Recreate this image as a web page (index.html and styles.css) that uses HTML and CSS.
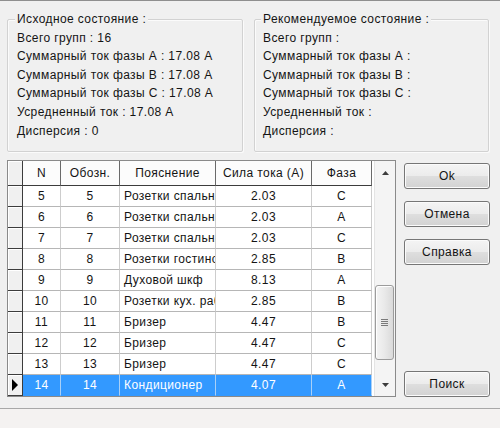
FILE: index.html
```html
<!DOCTYPE html>
<html lang="ru">
<head>
<meta charset="utf-8">
<title>Распределение по фазам</title>
<link rel="stylesheet" href="styles.css">
</head>
<body>
<div class="window">
  <div class="top">
    <div class="group group-left">
      <div class="legend">Исходное состояние :</div>
      <div>Всего групп : 16</div>
      <div>Суммарный ток фазы А : 17.08 А</div>
      <div>Суммарный ток фазы В : 17.08 А</div>
      <div>Суммарный ток фазы С : 17.08 А</div>
      <div>Усредненный ток : 17.08 А</div>
      <div>Дисперсия : 0</div>
    </div>
    <div class="group group-right">
      <div class="legend">Рекомендуемое состояние :</div>
      <div>Всего групп :</div>
      <div>Суммарный ток фазы А :</div>
      <div>Суммарный ток фазы В :</div>
      <div>Суммарный ток фазы С :</div>
      <div>Усредненный ток :</div>
      <div>Дисперсия :</div>
    </div>
  </div>

  <div class="middle">
    <div class="grid">
      <div class="table">
        <div class="row head">
          <div class="cell rh"></div>
          <div class="cell c-n">N</div>
          <div class="cell c-o">Обозн.</div>
          <div class="cell c-p center">Пояснение</div>
          <div class="cell c-s">Сила тока (А)</div>
          <div class="cell c-f">Фаза</div>
        </div>
        <div class="row"><div class="cell rh"></div><div class="cell c-n">5</div><div class="cell c-o">5</div><div class="cell c-p">Розетки спальня 1</div><div class="cell c-s">2.03</div><div class="cell c-f">C</div></div>
        <div class="row"><div class="cell rh"></div><div class="cell c-n">6</div><div class="cell c-o">6</div><div class="cell c-p">Розетки спальня 2</div><div class="cell c-s">2.03</div><div class="cell c-f">A</div></div>
        <div class="row"><div class="cell rh"></div><div class="cell c-n">7</div><div class="cell c-o">7</div><div class="cell c-p">Розетки спальня 3</div><div class="cell c-s">2.03</div><div class="cell c-f">C</div></div>
        <div class="row"><div class="cell rh"></div><div class="cell c-n">8</div><div class="cell c-o">8</div><div class="cell c-p">Розетки гостиной</div><div class="cell c-s">2.85</div><div class="cell c-f">B</div></div>
        <div class="row"><div class="cell rh"></div><div class="cell c-n">9</div><div class="cell c-o">9</div><div class="cell c-p">Духовой шкф</div><div class="cell c-s">8.13</div><div class="cell c-f">A</div></div>
        <div class="row"><div class="cell rh"></div><div class="cell c-n">10</div><div class="cell c-o">10</div><div class="cell c-p">Розетки кух. рабочая</div><div class="cell c-s">2.85</div><div class="cell c-f">B</div></div>
        <div class="row"><div class="cell rh"></div><div class="cell c-n">11</div><div class="cell c-o">11</div><div class="cell c-p">Бризер</div><div class="cell c-s">4.47</div><div class="cell c-f">B</div></div>
        <div class="row"><div class="cell rh"></div><div class="cell c-n">12</div><div class="cell c-o">12</div><div class="cell c-p">Бризер</div><div class="cell c-s">4.47</div><div class="cell c-f">C</div></div>
        <div class="row"><div class="cell rh"></div><div class="cell c-n">13</div><div class="cell c-o">13</div><div class="cell c-p">Бризер</div><div class="cell c-s">4.47</div><div class="cell c-f">C</div></div>
        <div class="row sel"><div class="cell rh"><svg class="pointer" width="6" height="12" viewBox="0 0 6 12"><path d="M0 0 L6 6 L0 12 Z" fill="#000"/></svg></div><div class="cell c-n">14</div><div class="cell c-o">14</div><div class="cell c-p">Кондиционер</div><div class="cell c-s">4.07</div><div class="cell c-f">A</div></div>
      </div>
      <div class="vscroll">
        <div class="sb-btn sb-up"><svg width="7" height="4" viewBox="0 0 7 4"><path d="M3.5 0 L7 4 L0 4 Z" fill="#3c3c3c"/></svg></div>
        <div class="sb-track">
          <div class="thumb">
            <div class="grip"><span></span><span></span><span></span><span></span></div>
          </div>
        </div>
        <div class="sb-btn sb-down"><svg width="7" height="4" viewBox="0 0 7 4"><path d="M0 0 L7 0 L3.5 4 Z" fill="#3c3c3c"/></svg></div>
      </div>
    </div>
    <div class="buttons">
      <button class="btn">Ok</button>
      <button class="btn">Отмена</button>
      <button class="btn">Справка</button>
      <button class="btn btn-search">Поиск</button>
    </div>
  </div>

  <div class="status"></div>
</div>
</body>
</html>
```

FILE: styles.css
```css
* { box-sizing: border-box; }

body {
  margin: 0;
  background: #f0f0f0;
  font: 12px "Liberation Sans", Arial, sans-serif;
  letter-spacing: 0.4px;
  color: #141414;
}

.window {
  width: 500px;
  height: 428px;
  border-top: 1px solid #8f8f8f;
  display: flex;
  flex-direction: column;
  overflow: hidden;
}

/* ---- group boxes ---- */
.top {
  display: flex;
  gap: 11px;
  padding-left: 7px;
  margin-top: 18px;
}

.group {
  height: 133px;
  border: 1px solid #d2d2d2;
  border-radius: 2px;
  box-shadow: inset 1px 1px #fbfbfb, 1px 1px #fbfbfb;
  line-height: 18.6px;
  padding-left: 9px;
  white-space: nowrap;
}
.group-left { width: 236px; }
.group-right { width: 235px; padding-left: 8px; }

.legend {
  width: fit-content;
  margin-top: -10px;
  margin-left: -2px;
  padding: 0 2px;
  background: #f0f0f0;
}

/* ---- grid ---- */
.middle {
  display: flex;
  margin-top: 8px;
  padding-left: 7px;
}

.grid {
  width: 389px;
  height: 237px;
  border: 1px solid #8a8a8a;
  background: #fff;
  display: flex;
}

.table { flex: 1; }

.row { display: flex; height: 21px; }
.row.head { height: 25px; }

.cell {
  height: 100%;
  border-right: 1px solid #cdcdcd;
  border-bottom: 1px solid #b6b6b6;
  display: flex;
  align-items: center;
  justify-content: center;
  white-space: nowrap;
  overflow: hidden;
}

.rh  { width: 15px; }
.c-n { width: 38px; }
.c-o { width: 59px; }
.c-p { width: 96px; justify-content: flex-start; padding-left: 4px; }
.c-p.center { justify-content: center; padding-left: 0; }
.c-s { width: 96px; }
.c-f { width: 60px; }

.head .cell {
  background: #fcfcfc;
  border-right-color: #6a6a6a;
  border-bottom-color: #3c3c3c;
}

.cell.rh,
.head .cell.rh {
  background: #f0f0f0;
  border-right: 1px solid #3c3c3c;
  border-bottom: 1px solid #3c3c3c;
  box-shadow: inset 1px 1px #ffffff;
  justify-content: flex-start;
  padding-left: 4px;
}

.sel .cell {
  background: #3399ff;
  color: #fff;
  border-right-color: #a9d0f7;
  border-bottom-color: #3399ff;
}
.sel .cell.rh {
  background: #f0f0f0;
  border-right-color: #3c3c3c;
  border-bottom-color: #3c3c3c;
}

/* ---- scrollbar ---- */
.vscroll {
  width: 21px;
  display: flex;
  flex-direction: column;
  background: #f4f4f4;
  border-left: 1px solid #e4e4e4;
}

.sb-btn {
  display: flex;
  align-items: center;
  justify-content: center;
}
.sb-up { height: 24px; }
.sb-down { height: 22px; }

.sb-track { flex: 1; }

.thumb {
  margin: 100px 1px 0 0;
  height: 75px;
  border: 1px solid #9c9c9c;
  border-radius: 3px;
  background: linear-gradient(to right, #f4f4f4, #e9e9e9 50%, #dadada);
  box-shadow: inset 1px 1px #ffffff;
  display: flex;
  align-items: center;
  justify-content: center;
}

.grip {
  display: flex;
  flex-direction: column;
  gap: 1px;
}
.grip span {
  width: 7px;
  height: 1px;
  background: #7a7a7a;
}

/* ---- buttons ---- */
.buttons {
  display: flex;
  flex-direction: column;
  gap: 12px;
  width: 86px;
  margin-left: 8px;
  padding-top: 3px;
}

.btn {
  height: 26px;
  border: 1px solid #767676;
  border-radius: 3px;
  background: linear-gradient(#f4f4f4 0%, #ececec 48%, #dedede 52%, #d2d2d2 100%);
  box-shadow: inset 0 0 0 1px #fbfbfb;
  font: inherit;
  letter-spacing: 0.4px;
  color: #141414;
  padding: 0;
}

.btn-search {
  margin-top: auto;
}

/* ---- bottom strip ---- */
.status {
  margin-top: 11px;
  flex: 1;
  border-top: 1px solid #a8a8a8;
  background: #f4f2f1;
}
```
